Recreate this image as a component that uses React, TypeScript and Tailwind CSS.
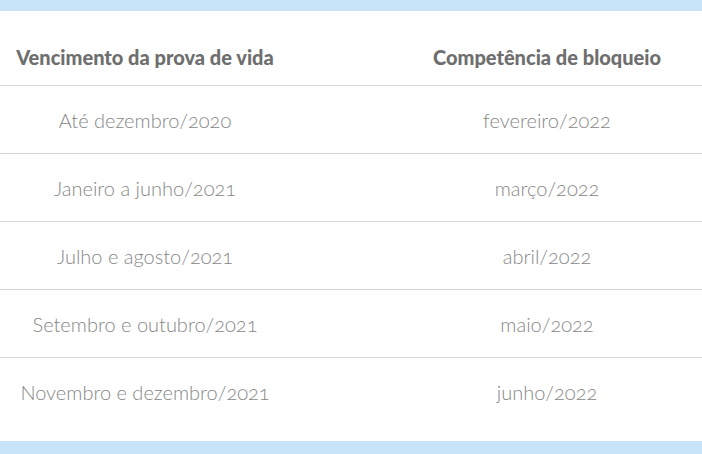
const rows: [string, string][] = [
  ["Até dezembro/2020", "fevereiro/2022"],
  ["Janeiro a junho/2021", "março/2022"],
  ["Julho e agosto/2021", "abril/2022"],
  ["Setembro e outubro/2021", "maio/2022"],
  ["Novembro e dezembro/2021", "junho/2022"],
]

export default function App() {
  return (
    <div className="flex h-[454px] w-[702px] flex-col bg-white font-['Lato',sans-serif]">
      <div className="h-[11px] bg-[#c6e3f8]" />
      <div className="flex-1">
        <div className="grid h-[75px] grid-cols-[290px_1fr] items-center border-b border-[#d6d6d6]">
          <div className="pt-[18px] text-center text-[20px] font-black text-[#6e6e6e]">
            Vencimento da prova de vida
          </div>
          <div className="pl-[102px] pt-[18px] text-center text-[20px] font-black text-[#6e6e6e]">
            Competência de bloqueio
          </div>
        </div>
        {rows.map(([a, b], i) => (
          <div
            key={a}
            className={`grid h-[68px] grid-cols-[290px_1fr] items-center text-[20px] font-light text-[#878787] [font-feature-settings:'onum'] ${
              i < rows.length - 1 ? "border-b border-[#d6d6d6]" : ""
            }`}
          >
            <div className="text-center">{a}</div>
            <div className="pl-[102px] text-center">{b}</div>
          </div>
        ))}
      </div>
      <div className="h-[13px] bg-[#c6e3f8]" />
    </div>
  )
}
